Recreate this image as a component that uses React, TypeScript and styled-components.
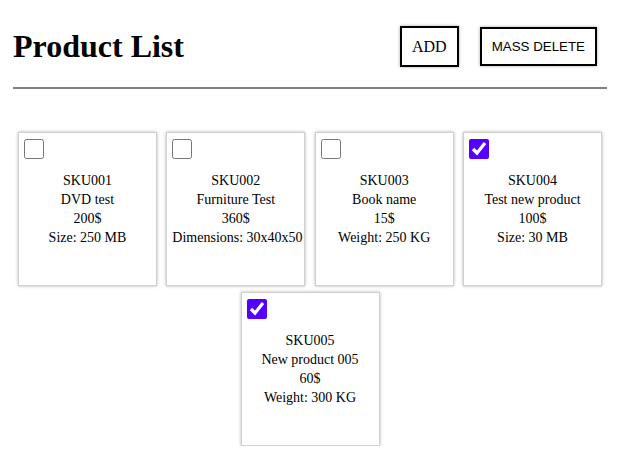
import React, { useState } from "react";
import styled, { createGlobalStyle } from "styled-components";

const GlobalStyle = createGlobalStyle`
  body {
    margin: 8px;
    background: #ffffff;
    color: #000000;
    font-family: "Liberation Serif", "Times New Roman", serif;
  }
`;

const Page = styled.div`
  padding: 0 11px 0 5px;
`;

const Header = styled.header`
  display: flex;
  align-items: center;
  justify-content: space-between;
  height: 77px;
  padding: 0 10px 2px 0;
  border-bottom: 2px solid #808080;
`;

const Title = styled.h1`
  margin: 0;
  font-size: 32px;
  font-weight: bold;
  font-family: "Liberation Serif", "Times New Roman", serif;
`;

const Actions = styled.div`
  display: flex;
  align-items: center;
  gap: 21px;
`;

const ActionButton = styled.button<{ $serif?: boolean }>`
  background: #ffffff;
  color: #000000;
  border: 2px solid #000000;
  box-shadow: 0 0 3px rgba(0, 0, 0, 0.35);
  padding: 10px;
  cursor: pointer;
  font-family: ${(p) =>
    p.$serif ? '"Liberation Serif", "Times New Roman", serif' : '"Liberation Sans", Arial, sans-serif'};
  font-size: ${(p) => (p.$serif ? "16px" : "13.33px")};
  line-height: ${(p) => (p.$serif ? "17px" : "15px")};
`;

const Grid = styled.div`
  display: flex;
  flex-wrap: wrap;
  justify-content: center;
  column-gap: 9.33px;
  row-gap: 6px;
  margin-top: 43px;
`;

const Card = styled.div`
  box-sizing: border-box;
  width: 139px;
  height: 154px;
  border: 1px solid #d0d0d0;
  box-shadow: 0 0 3px rgba(0, 0, 0, 0.3);
  padding: 6px 5px;
  display: flex;
  flex-direction: column;
`;

const Check = styled.input`
  display: block;
  margin: 0;
  width: 20px;
  height: 20px;
  accent-color: #5500ff;
`;

const Info = styled.div`
  margin-top: 12px;
  text-align: center;
  font-size: 14px;
  line-height: 19px;
  white-space: nowrap;
`;

const Line = styled.div``;

type Product = {
  sku: string;
  name: string;
  price: string;
  attr: string;
  checked: boolean;
};

const initial: Product[] = [
  { sku: "SKU001", name: "DVD test", price: "200$", attr: "Size: 250 MB", checked: false },
  { sku: "SKU002", name: "Furniture Test", price: "360$", attr: "Dimensions: 30x40x50", checked: false },
  { sku: "SKU003", name: "Book name", price: "15$", attr: "Weight: 250 KG", checked: false },
  { sku: "SKU004", name: "Test new product", price: "100$", attr: "Size: 30 MB", checked: true },
  { sku: "SKU005", name: "New product 005", price: "60$", attr: "Weight: 300 KG", checked: true },
];

export default function App() {
  const [items, setItems] = useState(initial);
  const toggle = (sku: string) =>
    setItems((prev) => prev.map((p) => (p.sku === sku ? { ...p, checked: !p.checked } : p)));

  return (
    <Page>
      <GlobalStyle />
      <Header>
        <Title>Product List</Title>
        <Actions>
          <ActionButton $serif>ADD</ActionButton>
          <ActionButton>MASS DELETE</ActionButton>
        </Actions>
      </Header>
      <Grid>
        {items.map((p) => (
          <Card key={p.sku}>
            <Check type="checkbox" checked={p.checked} onChange={() => toggle(p.sku)} />
            <Info>
              <Line>{p.sku}</Line>
              <Line>{p.name}</Line>
              <Line>{p.price}</Line>
              <Line>{p.attr}</Line>
            </Info>
          </Card>
        ))}
      </Grid>
    </Page>
  );
}
